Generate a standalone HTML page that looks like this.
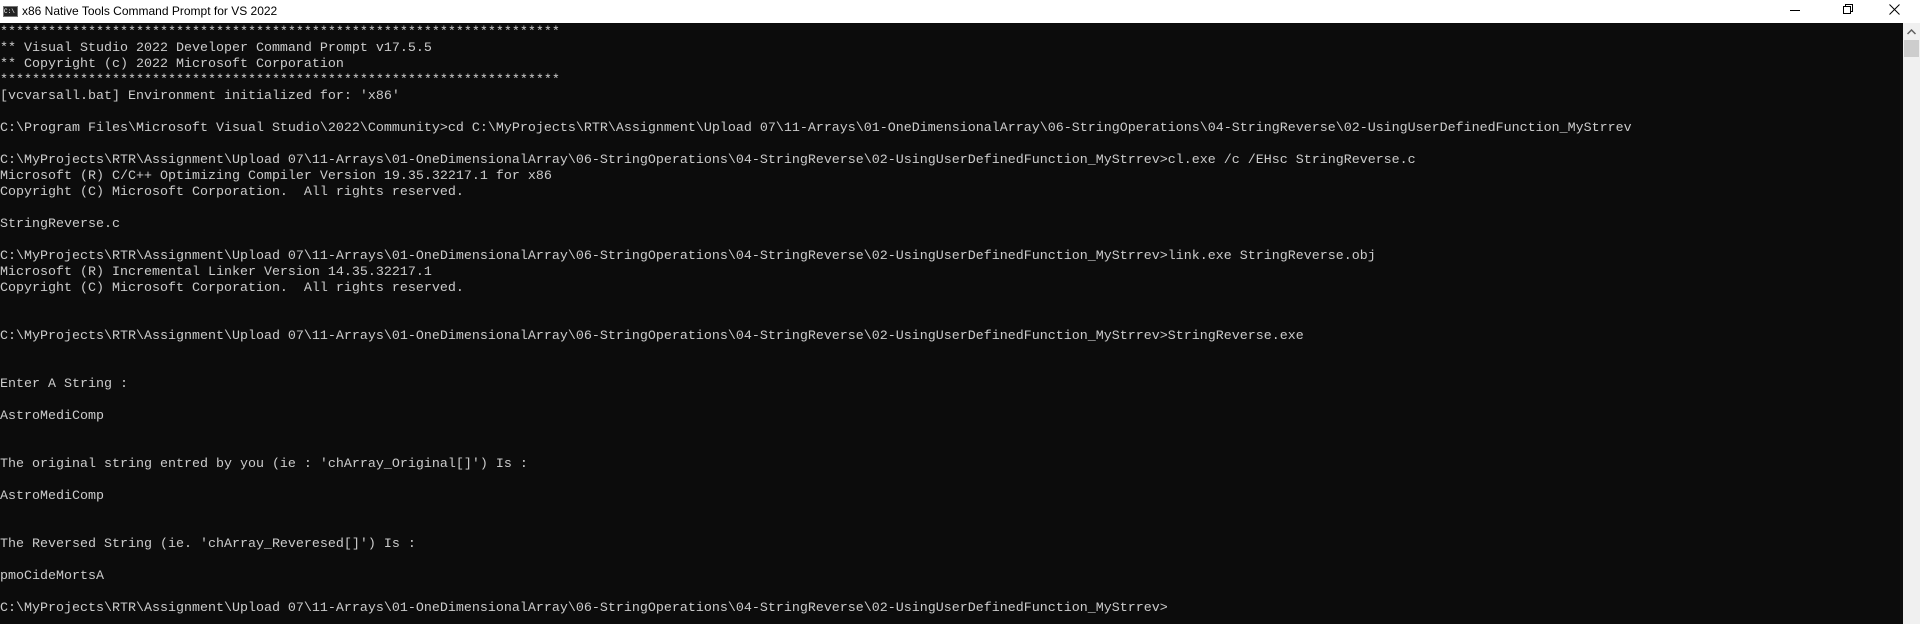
<!DOCTYPE html>
<html><head><meta charset="utf-8"><style>
html,body{margin:0;padding:0;width:1920px;height:624px;overflow:hidden;background:#0c0c0c}
#title{position:absolute;left:0;top:0;width:1920px;height:23px;background:#fff;font-family:"Liberation Sans",sans-serif;font-size:12px;color:#000}
#title .t{position:absolute;left:22px;top:4px}
#icon{position:absolute;left:3px;top:6px;width:13px;height:9px;background:#222;border:1px solid #777;font-size:6px;color:#fff;line-height:9px;font-family:"Liberation Mono",monospace}
#con{position:absolute;left:0;top:25px;width:1903px;height:599px;color:#cccccc;font-family:"Liberation Mono",monospace;font-size:13.33px;line-height:16px;white-space:pre;margin:0}
#sb{position:absolute;left:1903px;top:23px;width:17px;height:601px;background:#f0f0f0}
#thumb{position:absolute;left:1px;top:17px;width:15px;height:17px;background:#cdcdcd}
</style></head><body>
<div id="title"><div id="icon">C:\</div><span class="t">x86 Native Tools Command Prompt for VS 2022</span>
<svg style="position:absolute;left:1790px;top:5px" width="12" height="12"><line x1="0" y1="5.5" x2="10" y2="5.5" stroke="#000"/></svg>
<svg style="position:absolute;left:1843px;top:4px" width="12" height="12"><rect x="0.5" y="2.5" width="7" height="7" fill="none" stroke="#000"/><path d="M2.5 2.5V0.5H9.5V7.5H7.5" fill="none" stroke="#000"/></svg>
<svg style="position:absolute;left:1889px;top:4px" width="12" height="12"><path d="M0.5 0.5L10.5 10.5M10.5 0.5L0.5 10.5" stroke="#000"/></svg>
</div>
<pre id="con">**********************************************************************
** Visual Studio 2022 Developer Command Prompt v17.5.5
** Copyright (c) 2022 Microsoft Corporation
**********************************************************************
[vcvarsall.bat] Environment initialized for: 'x86'

C:\Program Files\Microsoft Visual Studio\2022\Community>cd C:\MyProjects\RTR\Assignment\Upload 07\11-Arrays\01-OneDimensionalArray\06-StringOperations\04-StringReverse\02-UsingUserDefinedFunction_MyStrrev

C:\MyProjects\RTR\Assignment\Upload 07\11-Arrays\01-OneDimensionalArray\06-StringOperations\04-StringReverse\02-UsingUserDefinedFunction_MyStrrev>cl.exe /c /EHsc StringReverse.c
Microsoft (R) C/C++ Optimizing Compiler Version 19.35.32217.1 for x86
Copyright (C) Microsoft Corporation.  All rights reserved.

StringReverse.c

C:\MyProjects\RTR\Assignment\Upload 07\11-Arrays\01-OneDimensionalArray\06-StringOperations\04-StringReverse\02-UsingUserDefinedFunction_MyStrrev>link.exe StringReverse.obj
Microsoft (R) Incremental Linker Version 14.35.32217.1
Copyright (C) Microsoft Corporation.  All rights reserved.


C:\MyProjects\RTR\Assignment\Upload 07\11-Arrays\01-OneDimensionalArray\06-StringOperations\04-StringReverse\02-UsingUserDefinedFunction_MyStrrev>StringReverse.exe


Enter A String :

AstroMediComp


The original string entred by you (ie : 'chArray_Original[]') Is :

AstroMediComp


The Reversed String (ie. 'chArray_Reveresed[]') Is :

pmoCideMortsA

C:\MyProjects\RTR\Assignment\Upload 07\11-Arrays\01-OneDimensionalArray\06-StringOperations\04-StringReverse\02-UsingUserDefinedFunction_MyStrrev></pre>
<div id="sb"><svg style="position:absolute;left:4px;top:6px" width="9" height="6"><path d="M0.5 5L4.5 1L8.5 5" fill="none" stroke="#606060" stroke-width="1.5"/></svg><div id="thumb"></div></div>
</body></html>
